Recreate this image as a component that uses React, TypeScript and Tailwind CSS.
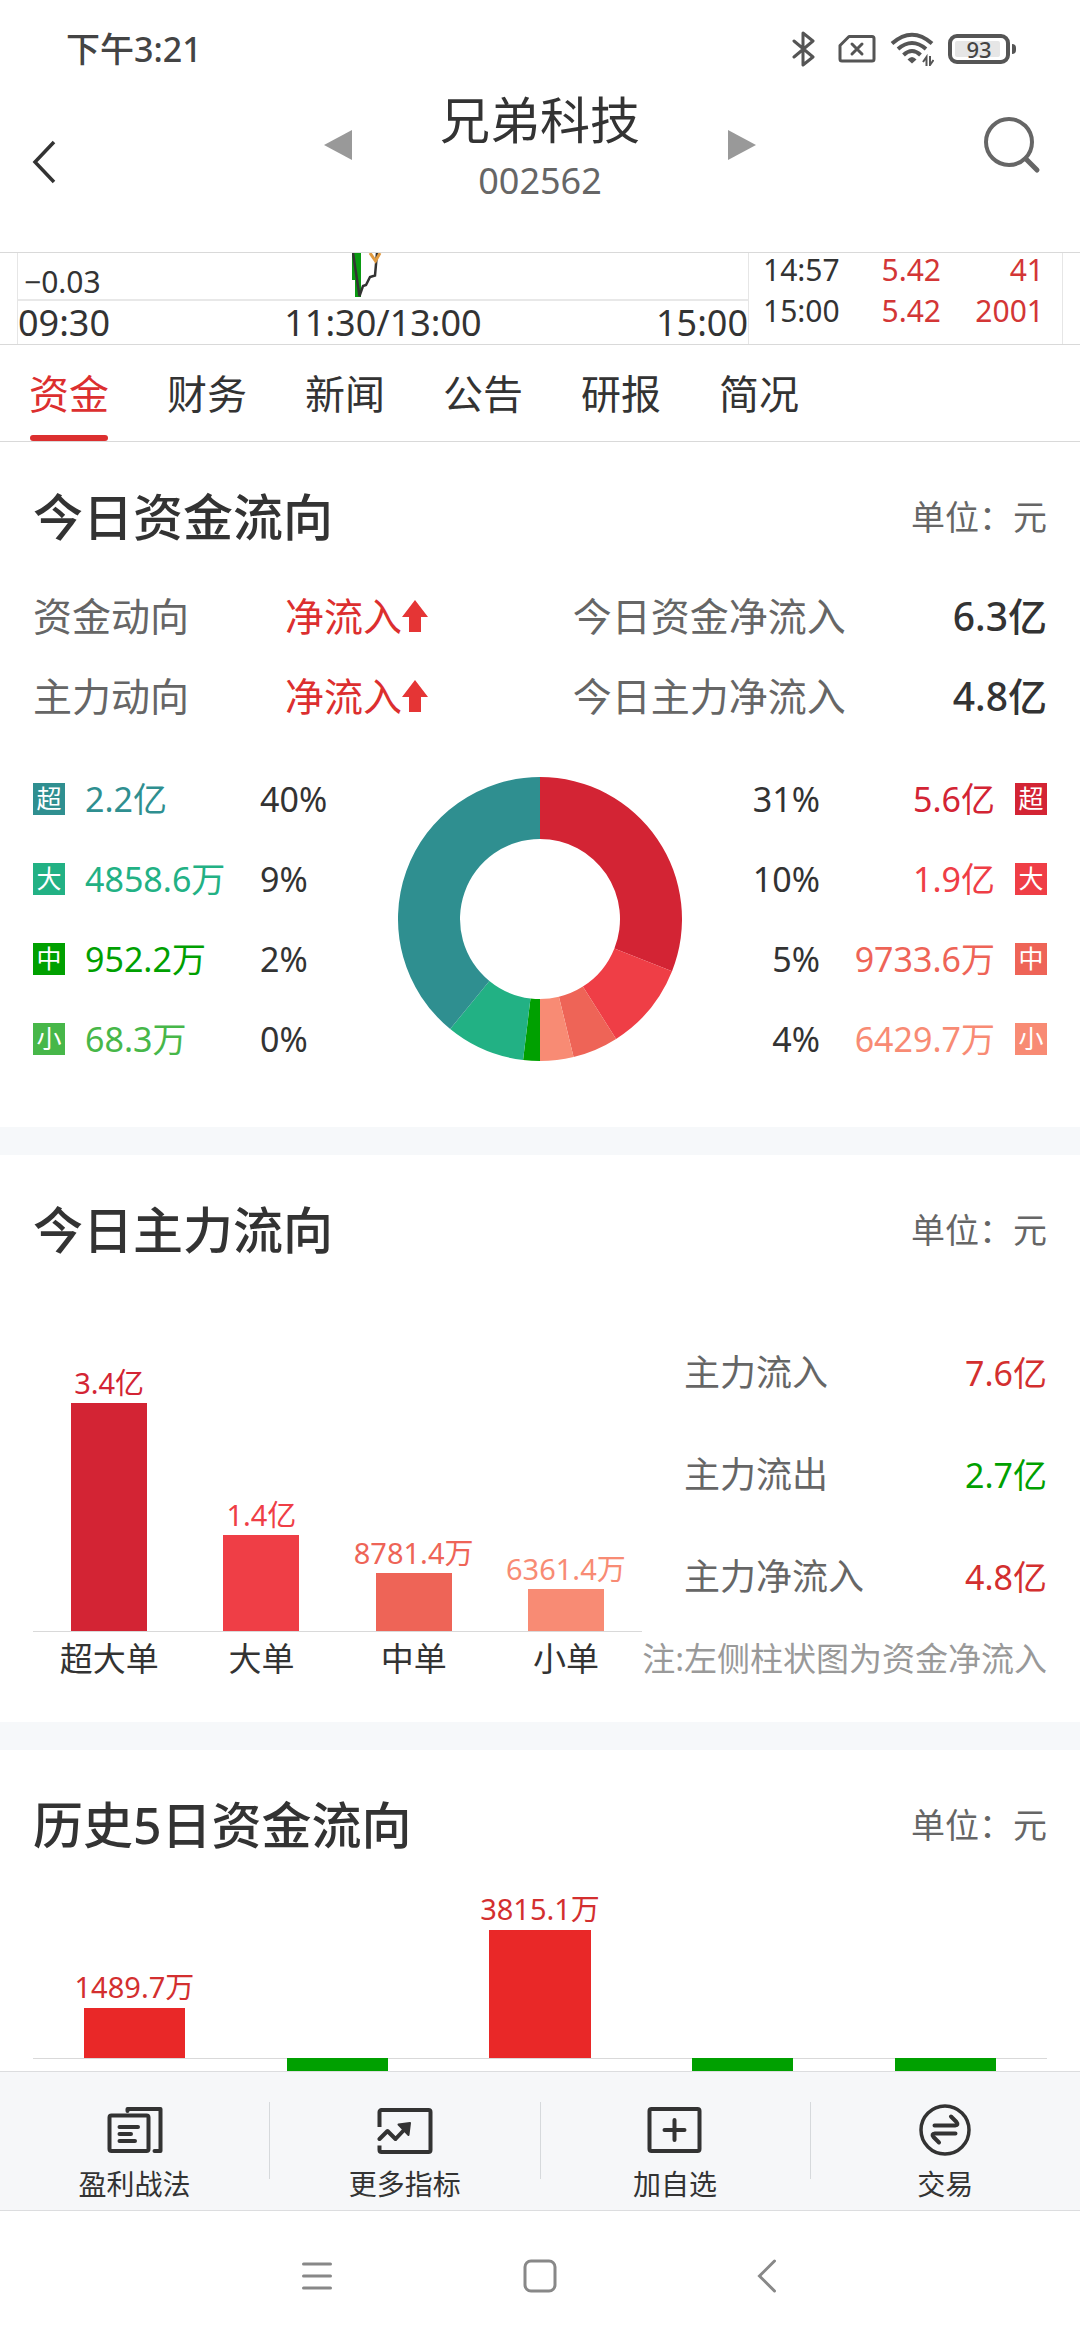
import { useState } from "react";
import type { ReactNode } from "react";

interface FlowItem {
  tag: string;
  amount: string;
  percent: string;
  badge: string;
  text: string;
}

interface Slice {
  value: number;
  color: string;
}

const tabs = ["资金", "财务", "新闻", "公告", "研报", "简况"];

const outflow: FlowItem[] = [
  { tag: "超", amount: "2.2亿", percent: "40%", badge: "bg-[#2f8f90]", text: "text-[#2f8f90]" },
  { tag: "大", amount: "4858.6万", percent: "9%", badge: "bg-[#22b184]", text: "text-[#22b184]" },
  { tag: "中", amount: "952.2万", percent: "2%", badge: "bg-[#00a000]", text: "text-[#00a000]" },
  { tag: "小", amount: "68.3万", percent: "0%", badge: "bg-[#47b749]", text: "text-[#47b749]" },
];

const inflow: FlowItem[] = [
  { tag: "超", amount: "5.6亿", percent: "31%", badge: "bg-[#d32434]", text: "text-[#d32434]" },
  { tag: "大", amount: "1.9亿", percent: "10%", badge: "bg-[#ef3e46]", text: "text-[#ef3e46]" },
  { tag: "中", amount: "9733.6万", percent: "5%", badge: "bg-[#ee6457]", text: "text-[#ee6457]" },
  { tag: "小", amount: "6429.7万", percent: "4%", badge: "bg-[#f88b74]", text: "text-[#f88b74]" },
];

// clockwise from 12 o'clock
const slices: Slice[] = [
  { value: 31, color: "#d32434" },
  { value: 10, color: "#ef3e46" },
  { value: 5.2, color: "#ee6457" },
  { value: 3.8, color: "#f88b74" },
  { value: 1.9, color: "#00a000" },
  { value: 9, color: "#22b184" },
  { value: 39.1, color: "#2f8f90" },
];

const mainBars = [
  { name: "超大单", label: "3.4亿", height: 228, bar: "bg-[#d32434]", text: "text-[#d32434]" },
  { name: "大单", label: "1.4亿", height: 96, bar: "bg-[#ef3e46]", text: "text-[#ef3e46]" },
  { name: "中单", label: "8781.4万", height: 58, bar: "bg-[#ee6457]", text: "text-[#ee6457]" },
  { name: "小单", label: "6361.4万", height: 42, bar: "bg-[#f88b74]", text: "text-[#f88b74]" },
];

const historyBars = [
  { label: "1489.7万", height: 50 },
  { label: "", height: -60 },
  { label: "3815.1万", height: 128 },
  { label: "", height: -60 },
  { label: "", height: -60 },
];

const trades = [
  { time: "14:57", price: "5.42", volume: "41" },
  { time: "15:00", price: "5.42", volume: "2001" },
];

const StatusBar = () => (
  <div className="flex h-[98px] items-center justify-between pr-[64px] pl-[66px] text-[#444]">
    <span className="text-[34px] font-medium">下午3:21</span>
    <div className="flex items-center gap-[14px]">
      <svg className="mr-[7px]" width="26" height="36" viewBox="0 0 26 36" fill="none" stroke="#555" strokeWidth="3" strokeLinejoin="round" strokeLinecap="round">
        <path d="M3 10L22 26L12 34V2L22 10L3 26" />
      </svg>
      <svg width="38" height="30" viewBox="0 0 38 30" fill="none" stroke="#555" strokeWidth="3" strokeLinejoin="round" strokeLinecap="round">
        <path d="M11 2.500H34a2 2 0 0 1 2 2V25a2 2 0 0 1-2 2H4a2 2 0 0 1-2-2V11.500Z" />
        <path d="M14 10L24 20M24 10L14 20" />
      </svg>
      <svg width="44" height="34" viewBox="0 0 44 34" fill="none" stroke="#555" strokeWidth="4">
        <path d="M2 11.500Q22 -6 42 11.500" />
        <path d="M8 17Q22 5 36 17" />
        <path d="M13.500 23Q22 15 30.500 23" />
        <path d="M17.500 27.500Q22 22.500 26.500 27.500L22 31.500Z" fill="#555" stroke="none" />
        <path d="M36.500 34V25L33 30M40 24V33L43.500 28" strokeWidth="2" />
      </svg>
      <div className="flex items-center gap-[2px]">
        <div className="relative flex h-[30px] w-[62px] items-center justify-center rounded-[9px] border-4 border-[#555]">
          <span className="absolute top-[3px] left-[3px] h-4 w-[45px] rounded-xs bg-[#e6e6e6]" />
          <span className="relative text-[22px] leading-none font-medium">93</span>
        </div>
        <span className="h-[10px] w-1 rounded-r bg-[#555]" />
      </div>
    </div>
  </div>
);

const Header = () => (
  <header className="grid h-[155px] grid-cols-[1fr_auto_1fr] items-start border-b border-[#d9d9d9] px-[32px]">
    <button aria-label="返回" className="mt-[42px] justify-self-start">
      <svg width="24" height="44" viewBox="0 0 24 44" fill="none" stroke="#333" strokeWidth="3.500">
        <path d="M22 2L3 22L22 42" />
      </svg>
    </button>
    <div className="flex items-start gap-[88px]">
      <button aria-label="上一只" className="mt-[32px]">
        <svg width="28" height="30" viewBox="0 0 28 30" fill="#999">
          <path d="M28 0V30L0 15Z" />
        </svg>
      </button>
      <div className="flex flex-col items-center">
        <h1 className="text-[50px] leading-[44px]">兄弟科技</h1>
        <p className="mt-[14px] text-[36px] leading-[50px] text-[#666]">002562</p>
      </div>
      <button aria-label="下一只" className="mt-[32px]">
        <svg width="28" height="30" viewBox="0 0 28 30" fill="#999">
          <path d="M0 0V30L28 15Z" />
        </svg>
      </button>
    </div>
    <button aria-label="搜索" className="mt-[18px] justify-self-end">
      <svg width="64" height="58" viewBox="0 0 64 58" fill="none" stroke="#666" strokeWidth="4" strokeLinecap="round">
        <circle cx="25" cy="26" r="23" />
        <path d="M42 43L53 54" strokeWidth="5" />
      </svg>
    </button>
  </header>
);

const QuoteStrip = () => (
  <div className="flex h-[92px] border-b border-[#d9d9d9] px-[17px] leading-none">
    <div className="min-w-0 flex-1 border-x border-[#e6e6e6]">
      <div className="relative flex h-[48px] items-end border-b-2 border-[#e8e8e8] pb-[2px] pl-[6px] text-[30px]">
        <span>−0.03</span>
        <svg className="absolute top-0 left-[334px]" width="32" height="46" viewBox="0 0 32 46" fill="none">
          <path d="M0 0H9V44H3V27H0Z" fill="#0a9a12" />
          <path d="M1 0L7.500 43L11 33L14 32L18 24L23 22.500L25 0" stroke="#333" strokeWidth="2.500" />
          <path d="M18 0L23.500 8L28 0" stroke="#e09a40" strokeWidth="3" />
        </svg>
      </div>
      <div className="flex h-[43px] items-center justify-between text-[36px]">
        <span>09:30</span>
        <span>11:30/13:00</span>
        <span>15:00</span>
      </div>
    </div>
    <div className="w-[314px] border-r border-[#e6e6e6]">
      <table className="w-full table-fixed text-[30px]">
        <tbody>
          {trades.map((t) => (
            <tr key={t.time} className="h-[41px]">
              <td className="w-[100px] pb-[8px] pl-[14px]">{t.time}</td>
              <td className="w-[92px] pb-[8px] text-right text-[#d33636]">{t.price}</td>
              <td className="pr-[18px] pb-[8px] text-right text-[#d33636]">{t.volume}</td>
            </tr>
          ))}
        </tbody>
      </table>
    </div>
  </div>
);

const SectionTitle = ({ title }: { title: string }) => (
  <div className="flex h-[150px] items-center justify-between">
    <h2 className="text-[50px] font-medium">{title}</h2>
    <span className="text-[34px] text-[#666]">单位：元</span>
  </div>
);

const Section = ({ title, children }: { title: string; children: ReactNode }) => (
  <section className="bg-white px-[33px]">
    <SectionTitle title={title} />
    {children}
  </section>
);

const TrendRow = ({ name, total, amount }: { name: string; total: string; amount: string }) => (
  <div className="flex h-[80px] items-center text-[39px] text-[#666]">
    <span className="w-[252px]">{name}</span>
    <span className="flex flex-1 items-center text-[#dc2f2f]">
      净流入
      <svg width="26" height="33" viewBox="0 0 26 33" fill="#e53535">
        <path d="M13 0L26 17H19V32H7V17H0Z" />
      </svg>
    </span>
    <span className="w-[380px]">{total}</span>
    <span className="text-right font-medium text-[#333]">{amount}</span>
  </div>
);

const FlowList = ({ items, mirrored }: { items: FlowItem[]; mirrored?: boolean }) => (
  <ul className="flex-1 text-[34px]">
    {items.map((item) => (
      <li key={item.tag} className={`flex h-[80px] items-center ${mirrored ? "flex-row-reverse text-right" : ""}`}>
        <span className={`flex size-8 items-center justify-center text-[25px] text-white ${item.badge}`}>{item.tag}</span>
        <span className={`w-[175px] ${mirrored ? "mr-[20px]" : "ml-[20px]"} ${item.text}`}>{item.amount}</span>
        <span>{item.percent}</span>
      </li>
    ))}
  </ul>
);

const Donut = () => {
  const outer = 142;
  const inner = 80;
  const total = slices.reduce((sum, s) => sum + s.value, 0);
  let start = 0;

  const point = (r: number, ratio: number) => {
    const angle = ratio * Math.PI * 2;
    return `${outer + r * Math.sin(angle)} ${outer - r * Math.cos(angle)}`;
  };

  return (
    <svg className="mt-[18px]" width="284" height="284" viewBox="0 0 284 284">
      {slices.map((s) => {
        const from = start / total;
        start += s.value;
        const to = start / total;
        return (
          <path
            key={s.color}
            fill={s.color}
            d={`M${point(outer, from)}A${outer} ${outer} 0 0 1 ${point(outer, to)}L${point(inner, to)}A${inner} ${inner} 0 0 0 ${point(inner, from)}Z`}
          />
        );
      })}
    </svg>
  );
};

const MainFlowChart = () => (
  <div className="w-[609px]">
    <div className="grid h-[327px] grid-cols-4 items-end border-b border-[#d9d9d9]">
      {mainBars.map((b) => (
        <div key={b.name} className="flex flex-col items-center">
          <span className={`text-[29px] leading-[40px] whitespace-nowrap ${b.text}`}>{b.label}</span>
          <div className={`w-1/2 ${b.bar}`} style={{ height: b.height }} />
        </div>
      ))}
    </div>
    <div className="grid grid-cols-4 text-center text-[33px] leading-[54px]">
      {mainBars.map((b) => (
        <span key={b.name}>{b.name}</span>
      ))}
    </div>
  </div>
);

const SummaryRow = ({ name, amount, color }: { name: string; amount: string; color: string }) => (
  <div className="flex h-[102px] items-center justify-between pl-[42px]">
    <span className="text-[36px] text-[#666]">{name}</span>
    <span className={`text-[34px] ${color}`}>{amount}</span>
  </div>
);

const HistoryChart = () => (
  <div className="-mt-5 grid grid-cols-5">
    {historyBars.map((b, idx) => (
      <div key={idx} className="flex flex-col">
        <div className="flex h-[179px] flex-col items-center justify-end border-b border-[#d9d9d9]">
          <span className="text-[29px] leading-[42px] text-[#d32f2f]">{b.label}</span>
          {b.height > 0 && <div className="w-1/2 bg-[#e92828]" style={{ height: b.height }} />}
        </div>
        {b.height < 0 && <div className="mx-auto -mt-px w-1/2 bg-[#00a000]" style={{ height: -b.height }} />}
      </div>
    ))}
  </div>
);

const ToolButton = ({ label, children }: { label: string; children: ReactNode }) => (
  <button className="flex flex-1 flex-col items-center">
    <svg width="56" height="54" viewBox="0 0 56 54" fill="none" stroke="#333" strokeWidth="4" strokeLinecap="round" strokeLinejoin="round">
      {children}
    </svg>
    <span className="mt-[8px] text-[28px] leading-[40px]">{label}</span>
  </button>
);

const ToolDivider = () => <span className="h-[77px] w-px bg-[#d6d9dc]" />;

const Toolbar = () => (
  <nav className="flex h-[140px] items-start border-y border-[#dcdddf] bg-[#f6f7f9] pt-[30px]">
    <ToolButton label="盈利战法">
      <rect x="2.500" y="13.500" width="39" height="35.500" rx="2" />
      <path d="M20.500 9V7H53.500V49H47.500" />
      <path d="M12.500 25H31M12.500 32H24M12.500 39H28" />
    </ToolButton>
    <ToolDivider />
    <ToolButton label="更多指标">
      <path d="M2.500 25V10a2 2 0 0 1 2-2H51.500a2 2 0 0 1 2 2V48a2 2 0 0 1-2 2H4.500a2 2 0 0 1-2-2V43.500" strokeLinecap="butt" />
      <path d="M2.500 37L10.500 29L18.500 37L27 28" />
      <path d="M21.500 22.500L33 21L31.500 33Z" fill="#333" strokeWidth="2" />
    </ToolButton>
    <ToolDivider />
    <ToolButton label="加自选">
      <rect x="2.500" y="7" width="50" height="42" rx="2" />
      <path d="M27.500 18V38M17.500 28H37.500" />
    </ToolButton>
    <ToolDivider />
    <ToolButton label="交易">
      <circle cx="28" cy="28" r="24" strokeWidth="3.500" />
      <path d="M17.500 23.500H38Q42 23 39.500 20L34 14.500M38.500 31.500H18Q14 32 16.500 35L22 40.500" />
    </ToolButton>
  </nav>
);

const SystemNav = () => (
  <div className="flex h-[129px] items-center justify-center gap-[190px]">
    <button aria-label="菜单">
      <svg width="32" height="34" viewBox="0 0 32 34" stroke="#888" strokeWidth="3" strokeLinecap="round">
        <path d="M2.500 5H29.500M2.500 17H29.500M2.500 29H29.500" />
      </svg>
    </button>
    <button aria-label="主屏幕">
      <svg width="34" height="34" viewBox="0 0 34 34" fill="none" stroke="#888" strokeWidth="3">
        <rect x="2" y="2" width="30" height="30" rx="6" />
      </svg>
    </button>
    <button aria-label="返回上一级">
      <svg width="32" height="34" viewBox="0 0 32 34" fill="none" stroke="#888" strokeWidth="3" strokeLinecap="round">
        <path d="M27.500 2L12.500 17L27.500 32" />
      </svg>
    </button>
  </div>
);

export default function App() {
  const [activeTab, setActiveTab] = useState("资金");

  return (
    <div className="flex h-screen flex-col bg-white font-['Noto_Sans','Noto_Sans_CJK_SC',sans-serif] text-[#333]">
      <StatusBar />
      <Header />
      <QuoteStrip />

      <div className="flex h-[97px] gap-[58px] border-b border-[#d9d9d9] pl-[29px]">
        {tabs.map((tab) => (
          <button
            key={tab}
            onClick={() => setActiveTab(tab)}
            className={`flex flex-col items-center justify-between text-[40px] leading-[98px] ${activeTab === tab ? "text-[#dc2f2f]" : ""}`}
          >
            <span className="h-[90px]">{tab}</span>
            {activeTab === tab && <span className="h-[6px] w-[78px] rounded-full bg-[#dc2f2f]" />}
          </button>
        ))}
      </div>

      <main className="flex min-h-0 flex-1 flex-col gap-[28px] overflow-hidden bg-[#f6f8fa] *:shrink-0">
        <Section title="今日资金流向">
          <div className="-mt-[16px]">
            <TrendRow name="资金动向" total="今日资金净流入" amount="6.3亿" />
            <TrendRow name="主力动向" total="今日主力净流入" amount="4.8亿" />
          </div>
          <div className="mt-[23px] flex pb-[48px]">
            <FlowList items={outflow} />
            <Donut />
            <FlowList items={inflow} mirrored />
          </div>
        </Section>

        <Section title="今日主力流向">
          <div className="flex justify-between pb-[36px]">
            <MainFlowChart />
            <div className="flex flex-1 flex-col justify-end">
              <SummaryRow name="主力流入" amount="7.6亿" color="text-[#d32f2f]" />
              <SummaryRow name="主力流出" amount="2.7亿" color="text-[#00a000]" />
              <SummaryRow name="主力净流入" amount="4.8亿" color="text-[#d32f2f]" />
              <p className="mt-1 text-right text-[33px] leading-[54px] whitespace-nowrap text-[#999]">注:左侧柱状图为资金净流入</p>
            </div>
          </div>
        </Section>

        <Section title="历史5日资金流向">
          <HistoryChart />
        </Section>
      </main>

      <Toolbar />
      <SystemNav />
    </div>
  );
}
